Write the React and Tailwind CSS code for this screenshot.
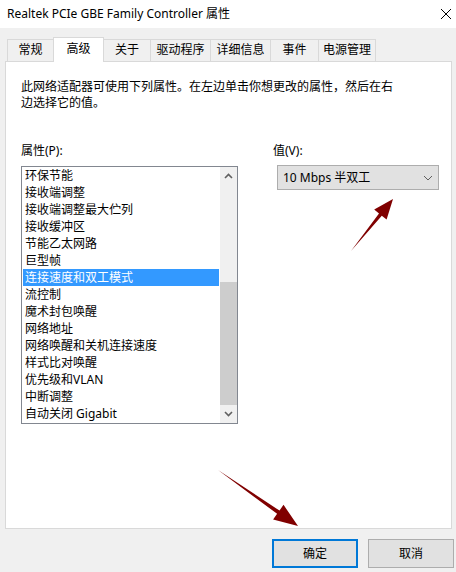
import React from 'react';

const tabs = [
    { label: '常规', w: 'w-[46px]' },
    { label: '高级', w: 'w-[51px]', active: true },
    { label: '关于', w: 'w-[46px]', afterActive: true },
    { label: '驱动程序', w: 'w-[60px]' },
    { label: '详细信息', w: 'w-[60px]' },
    { label: '事件', w: 'w-[48px]' },
    { label: '电源管理', w: 'w-[58px]', last: true },
];

const props = [
    '环保节能',
    '接收端调整',
    '接收端调整最大伫列',
    '接收缓冲区',
    '节能乙太网路',
    '巨型帧',
    '连接速度和双工模式',
    '流控制',
    '魔术封包唤醒',
    '网络地址',
    '网络唤醒和关机连接速度',
    '样式比对唤醒',
    '优先级和VLAN',
    '中断调整',
    '自动关闭 Gigabit',
];

function Tab({ tab }) {
    if (tab.active) {
        return (
            <div className={`${tab.w} h-[25px] -mb-px relative z-10 bg-white border-t border-l border-r border-[#d9d9d9] flex justify-center pt-[2px]`}>
                {tab.label}
            </div>
        );
    }
    return (
        <div
            className={`${tab.w} h-[22px] bg-[#f0f0f0] border-t border-[#d9d9d9] flex justify-center pt-[1px] ${tab.afterActive ? '' : 'border-l'} ${tab.last ? 'border-r' : ''}`}
        >
            {tab.label}
        </div>
    );
}

function Chevron({ up, className }) {
    return (
        <svg width="9" height="6" viewBox="0 0 9 6" className={className}>
            <path
                d={up ? 'M1 5 L4.5 1.5 L8 5' : 'M1 1 L4.5 4.5 L8 1'}
                fill="none"
                stroke="#606060"
                strokeWidth="1.6"
            />
        </svg>
    );
}

function PropertyList() {
    return (
        <div className="w-[217px] h-[258px] mt-[7px] border border-[#828790] bg-white flex">
            <div className="flex-1 flex flex-col">
                {props.map((p, i) => (
                    <div
                        key={p}
                        className={`h-[17px] leading-[17px] mx-px pl-[2px] whitespace-nowrap ${i === 6 ? 'bg-[#3399ff] text-white' : ''}`}
                    >
                        {p}
                    </div>
                ))}
            </div>
            <div className="w-[17px] bg-[#f0f0f0] flex flex-col">
                <div className="h-[17px] flex items-center justify-center">
                    <Chevron up />
                </div>
                <div className="h-[98px]" />
                <div className="h-[123px] bg-[#cdcdcd]" />
                <div className="h-[17px] flex items-center justify-center">
                    <Chevron />
                </div>
            </div>
        </div>
    );
}

function Arrows() {
    return (
        <svg className="absolute inset-0 pointer-events-none" width="456" height="572" viewBox="0 0 456 572">
            <polygon
                fill="#800000"
                points="351,251 379,213.5 374.2,209.6 393,199 386.6,219.6 381.8,215.7"
            />
            <polygon
                fill="#800000"
                points="218,470 279.5,510.6 283.5,504.8 298,526 273.1,519.6 277.1,513.8"
            />
        </svg>
    );
}

export default function App() {
    return (
        <div className="w-[456px] h-[572px] bg-[#f0f0f0] relative overflow-hidden flex flex-col text-[12px] text-black font-['Noto_Sans','Noto_Sans_CJK_SC',sans-serif]">
            <div className="h-[28px] bg-white flex items-center justify-between pl-[7px] pr-[4px] shrink-0">
                <span className="text-[12px]">Realtek PCIe GBE Family Controller 属性</span>
                <svg width="12" height="12" viewBox="0 0 12 12">
                    <path d="M1 1 L11 11 M11 1 L1 11" stroke="#000" strokeWidth="1" />
                </svg>
            </div>

            <div className="pt-[9px] px-[5px] flex flex-col">
                <div className="flex items-end h-[24px] pl-[2px]">
                    {tabs.map((t) => (
                        <Tab key={t.label} tab={t} />
                    ))}
                </div>
                <div className="w-[447px] h-[468px] bg-white border border-[#d9d9d9] pl-[15px] pt-[17px]">
                    <p className="leading-[16px]">
                        此网络适配器可使用下列属性。在左边单击你想更改的属性，然后在右
                        <br />
                        边选择它的值。
                    </p>
                    <div className="flex mt-[32px]">
                        <div className="flex flex-col">
                            <div className="leading-[16px]">属性(P):</div>
                            <PropertyList />
                        </div>
                        <div className="flex flex-col ml-[35px]">
                            <div className="leading-[16px]">值(V):</div>
                            <div className="ml-[4px] mt-[6px] w-[162px] h-[25px] bg-[#e1e1e1] border border-[#adadad] flex items-center justify-between pl-[5px] pr-[5px]">
                                <span>10 Mbps 半双工</span>
                                <svg width="10" height="6" viewBox="0 0 10 6">
                                    <path d="M1 1 L5 5 L9 1" fill="none" stroke="#606060" strokeWidth="1" />
                                </svg>
                            </div>
                        </div>
                    </div>
                </div>
            </div>

            <div className="flex justify-end gap-[10px] pr-[2px] mt-[10px]">
                <button className="w-[86px] h-[29px] bg-[#e1e1e1] border-2 border-[#0078d7]">确定</button>
                <button className="w-[86px] h-[29px] bg-[#e1e1e1] border border-[#adadad]">取消</button>
            </div>

            <Arrows />
        </div>
    );
}
